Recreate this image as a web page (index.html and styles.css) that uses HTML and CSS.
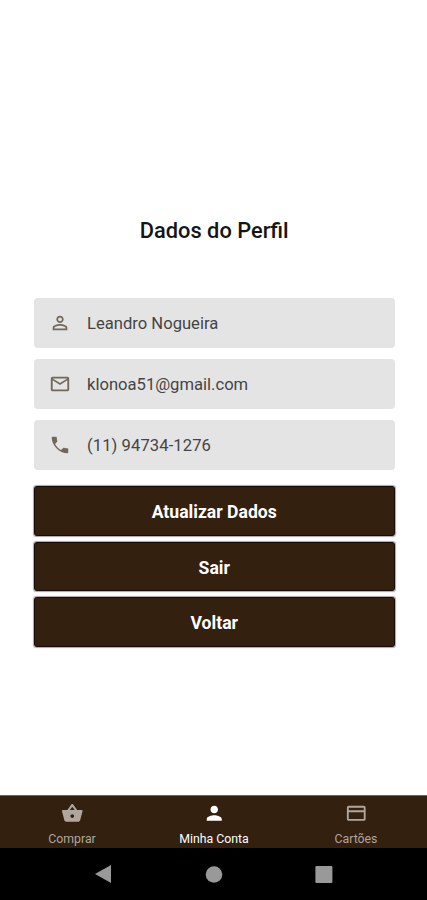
FILE: index.html
```html
<!DOCTYPE html>
<html lang="pt-BR">
<head>
<meta charset="utf-8">
<meta name="viewport" content="width=device-width, initial-scale=1">
<title>Dados do Perfil</title>
<link rel="stylesheet" href="styles.css">
</head>
<body>
<div class="screen">
  <main class="profile">
    <h1 class="title">Dados do Perfil</h1>
    <div class="fields">
      <div class="field">
        <svg class="field-icon" viewBox="0 0 24 24"><path d="M12 5.9a2.1 2.1 0 1 1 0 4.2 2.1 2.1 0 0 1 0-4.2m0 9c2.97 0 6.1 1.46 6.1 2.1v1.1H5.9V17c0-.64 3.13-2.1 6.1-2.1M12 4C9.79 4 8 5.79 8 8s1.79 4 4 4 4-1.79 4-4-1.79-4-4-4zm0 9c-2.67 0-8 1.34-8 4v3h16v-3c0-2.66-5.33-4-8-4z"/></svg>
        <span>Leandro Nogueira</span>
      </div>
      <div class="field">
        <svg class="field-icon" viewBox="0 0 24 24"><path d="M22 6c0-1.1-.9-2-2-2H4c-1.1 0-2 .9-2 2v12c0 1.1.9 2 2 2h16c1.1 0 2-.9 2-2V6zm-2 0l-8 5-8-5h16zm0 12H4V8l8 5 8-5v10z"/></svg>
        <span>klonoa51@gmail.com</span>
      </div>
      <div class="field">
        <svg class="field-icon" viewBox="0 0 24 24"><path d="M6.62 10.79c1.44 2.83 3.76 5.14 6.59 6.59l2.2-2.2c.27-.27.67-.36 1.02-.24 1.12.37 2.33.57 3.57.57.55 0 1 .45 1 1V20c0 .55-.45 1-1 1C11.6 21 3 12.4 3 4c0-.55.45-1 1-1h3.5c.55 0 1 .45 1 1 0 1.25.2 2.45.57 3.57.11.35.03.74-.25 1.02l-2.2 2.2z"/></svg>
        <span class="phone">(11) 94734-1276</span>
      </div>
    </div>
    <div class="actions">
      <button class="button" type="button">Atualizar Dados</button>
      <button class="button" type="button">Sair</button>
      <button class="button" type="button">Voltar</button>
    </div>
  </main>
  <nav class="tabs">
    <a class="tab">
      <svg class="tab-icon" viewBox="0 0 24 24"><path fill-rule="evenodd" d="M17.21 8.500l-4.380-6.060c-.19-.28-.51-.42-.83-.42-.32 0-.64.14-.83.43L6.790 8.500H2c-.55 0-1 .45-1 1 0 .09.010.18.040.27l2.540 9.770c.23.84 1 1.460 1.920 1.460h13c.92 0 1.690-.62 1.930-1.460l2.540-9.770.03-.27c0-.55-.45-1-1-1zM9.400 8.500L12 5l2.600 3.500zM12 17c-1.100 0-2-.9-2-2s.9-2 2-2 2 .9 2 2-.9 2-2 2z"/></svg>
      <span>Comprar</span>
    </a>
    <a class="tab tab-active">
      <svg class="tab-icon" viewBox="0 0 24 24"><path d="M12 12c2.21 0 4-1.79 4-4s-1.79-4-4-4-4 1.79-4 4 1.79 4 4 4zm0 2c-2.67 0-8 1.34-8 4v2h16v-2c0-2.66-5.33-4-8-4z"/></svg>
      <span>Minha Conta</span>
    </a>
    <a class="tab">
      <svg class="tab-icon" viewBox="0 0 24 24"><path d="M20 4H4c-1.11 0-1.99.89-1.99 2L2 18c0 1.11.89 2 2 2h16c1.11 0 2-.89 2-2V6c0-1.11-.89-2-2-2zm0 14H4v-7h16v7zm0-9.300H4V6h16v2.700z"/></svg>
      <span>Cartões</span>
    </a>
  </nav>
  <div class="system-bar">
    <svg viewBox="0 0 20 20"><path d="M17 1v18L1 10z"/></svg>
    <svg viewBox="0 0 20 20"><circle cx="10" cy="10.5" r="8.3"/></svg>
    <svg viewBox="0 0 20 20"><rect x="1.4" y="1.9" width="17" height="17" rx="1"/></svg>
  </div>
</div>
</body>
</html>
```
FILE: styles.css
```css
* { box-sizing: border-box; }
body {
  margin: 0;
  background: #fff;
  font-family: Roboto, "Liberation Sans", sans-serif;
}
.screen {
  display: flex;
  flex-direction: column;
  height: 900px;
}
.profile {
  flex: 1;
  padding: 216px 32px 0 33.5px;
}
.title {
  margin: 0 0 52px;
  font-size: 21.8px;
  line-height: 30px;
  font-weight: 500;
  text-align: center;
  color: #151515;
}
.fields { display: grid; gap: 11.5px; }
.field {
  display: flex;
  align-items: center;
  gap: 16px;
  height: 49.5px;
  padding: 1px 16px 0 15.5px;
  border-radius: 4px;
  background: #e4e4e4;
  color: #444;
  font-size: 16.6px;
}
.phone { letter-spacing: 0.08px; }
.field-icon {
  width: 22px;
  height: 22px;
  fill: #71675b;
}
.actions {
  display: grid;
  gap: 6px;
  margin-top: 16.5px;
}
.button {
  height: 49.5px;
  padding: 3px 0 0;
  border: 1.5px solid #160b08;
  border-radius: 3px;
  background: #33200e;
  box-shadow: 0 0 1px 0.5px #aaa5a9;
  color: #fff;
  font: 700 17.6px Roboto, "Liberation Sans", sans-serif;
}
.tabs {
  display: grid;
  grid-template-columns: repeat(3, 1fr);
  height: 53px;
  padding-left: 1px;
  border-top: 1px solid #6d675c;
  background: #33200e;
}
.tab {
  display: flex;
  flex-direction: column;
  align-items: center;
  padding-top: 6px;
  gap: 6px;
  color: #b0a69e;
  font-size: 12.3px;
  line-height: 16px;
}
.tab-active { color: #fff; }
.tab-icon {
  width: 22.5px;
  height: 22.5px;
  fill: currentColor;
}
.system-bar {
  display: flex;
  align-items: center;
  justify-content: center;
  gap: 90px;
  height: 52px;
  background: #000;
}
.system-bar svg {
  width: 20px;
  height: 20px;
  fill: #999;
}
```
